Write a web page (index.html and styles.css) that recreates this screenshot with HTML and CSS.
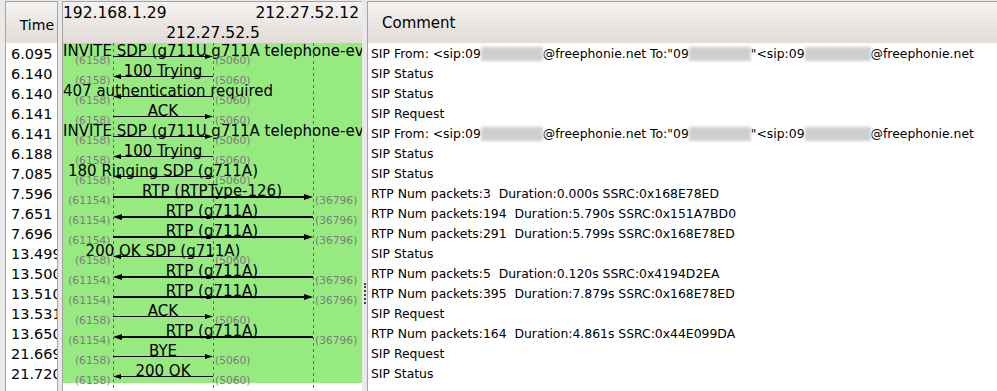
FILE: index.html
```html
<!DOCTYPE html>
<html>
<head>
<meta charset="utf-8">
<link rel="stylesheet" href="styles.css">
</head>
<body>
<div class="app">
  <div class="pane time-pane">
    <div class="hdr time-hdr">Time</div>
    <div class="rows time-rows">
      <div class="row">6.095</div>
      <div class="row">6.140</div>
      <div class="row">6.140</div>
      <div class="row">6.141</div>
      <div class="row">6.141</div>
      <div class="row">6.188</div>
      <div class="row">7.085</div>
      <div class="row">7.596</div>
      <div class="row">7.651</div>
      <div class="row">7.696</div>
      <div class="row">13.499</div>
      <div class="row">13.500</div>
      <div class="row">13.510</div>
      <div class="row">13.531</div>
      <div class="row">13.650</div>
      <div class="row">21.669</div>
      <div class="row">21.720</div>
    </div>
  </div>

  <div class="pane graph-pane">
    <div class="hdr graph-hdr">
      <div class="ips"><span>192.168.1.29</span><span>212.27.52.12</span></div>
      <div class="ip-mid">212.27.52.5</div>
    </div>
    <svg class="flow" width="299" height="347" viewBox="0 0 299 347">
      <rect class="bg" x="0" y="0" width="299" height="340"/>
      <line class="life" x1="50.5" y1="0" x2="50.5" y2="347"/>
      <line class="life" x1="150.5" y1="0" x2="150.5" y2="347"/>
      <line class="life" x1="250.5" y1="0" x2="250.5" y2="347"/>

      <!-- row 0 -->
      <text class="lbl" x="0" y="12.5">INVITE SDP (g711U g711A telephone-event)</text>
      <line class="sip" x1="50" y1="13.5" x2="149" y2="13.5"/>
      <polygon class="head" points="142,11 150,13.5 142,16"/>
      <text class="port" x="47.5" y="20.5" text-anchor="end">(6158)</text>
      <text class="port" x="152" y="20.5">(5060)</text>

      <!-- row 1 -->
      <text class="lbl" x="100" y="32.5" text-anchor="middle">100 Trying</text>
      <line class="sip" x1="51" y1="33.5" x2="150" y2="33.5"/>
      <polygon class="head" points="50,33.5 58,31 58,36"/>
      <text class="port" x="47.5" y="40.5" text-anchor="end">(6158)</text>
      <text class="port" x="152" y="40.5">(5060)</text>

      <!-- row 2 -->
      <text class="lbl" x="0" y="52.5">407 authentication required</text>
      <line class="sip" x1="51" y1="53.5" x2="150" y2="53.5"/>
      <polygon class="head" points="50,53.5 58,51 58,56"/>
      <text class="port" x="47.5" y="60.5" text-anchor="end">(6158)</text>
      <text class="port" x="152" y="60.5">(5060)</text>

      <!-- row 3 -->
      <text class="lbl" x="100" y="72.5" text-anchor="middle">ACK</text>
      <line class="sip" x1="50" y1="73.5" x2="149" y2="73.5"/>
      <polygon class="head" points="142,71 150,73.5 142,76"/>
      <text class="port" x="47.5" y="80.5" text-anchor="end">(6158)</text>
      <text class="port" x="152" y="80.5">(5060)</text>

      <!-- row 4 -->
      <text class="lbl" x="0" y="92.5">INVITE SDP (g711U g711A telephone-event)</text>
      <line class="sip" x1="50" y1="93.5" x2="149" y2="93.5"/>
      <polygon class="head" points="142,91 150,93.5 142,96"/>
      <text class="port" x="47.5" y="100.5" text-anchor="end">(6158)</text>
      <text class="port" x="152" y="100.5">(5060)</text>

      <!-- row 5 -->
      <text class="lbl" x="100" y="112.5" text-anchor="middle">100 Trying</text>
      <line class="sip" x1="51" y1="113.5" x2="150" y2="113.5"/>
      <polygon class="head" points="50,113.5 58,111 58,116"/>
      <text class="port" x="47.5" y="120.5" text-anchor="end">(6158)</text>
      <text class="port" x="152" y="120.5">(5060)</text>

      <!-- row 6 -->
      <text class="lbl" x="100" y="132.5" text-anchor="middle">180 Ringing SDP (g711A)</text>
      <line class="sip" x1="51" y1="133.5" x2="150" y2="133.5"/>
      <polygon class="head" points="50,133.5 58,131 58,136"/>
      <text class="port" x="47.5" y="140.5" text-anchor="end">(6158)</text>
      <text class="port" x="152" y="140.5">(5060)</text>

      <!-- row 7 -->
      <text class="lbl" x="149" y="152.5" text-anchor="middle">RTP (RTPType-126)</text>
      <line class="rtp" x1="50" y1="154" x2="248" y2="154"/>
      <polygon class="head" points="241,151 250,154 241,157"/>
      <text class="port" x="47.5" y="160.5" text-anchor="end">(61154)</text>
      <text class="port" x="252" y="160.5">(36796)</text>

      <!-- row 8 -->
      <text class="lbl" x="149" y="172.5" text-anchor="middle">RTP (g711A)</text>
      <line class="rtp" x1="52" y1="174" x2="250" y2="174"/>
      <polygon class="head" points="50,174 59,171 59,177"/>
      <text class="port" x="47.5" y="180.5" text-anchor="end">(61154)</text>
      <text class="port" x="252" y="180.5">(36796)</text>

      <!-- row 9 -->
      <text class="lbl" x="149" y="192.5" text-anchor="middle">RTP (g711A)</text>
      <line class="rtp" x1="50" y1="194" x2="248" y2="194"/>
      <polygon class="head" points="241,191 250,194 241,197"/>
      <text class="port" x="47.5" y="200.5" text-anchor="end">(61154)</text>
      <text class="port" x="252" y="200.5">(36796)</text>

      <!-- row 10 -->
      <text class="lbl" x="100" y="212.5" text-anchor="middle">200 OK SDP (g711A)</text>
      <line class="sip" x1="51" y1="213.5" x2="150" y2="213.5"/>
      <polygon class="head" points="50,213.5 58,211 58,216"/>
      <text class="port" x="47.5" y="220.5" text-anchor="end">(6158)</text>
      <text class="port" x="152" y="220.5">(5060)</text>

      <!-- row 11 -->
      <text class="lbl" x="149" y="232.5" text-anchor="middle">RTP (g711A)</text>
      <line class="rtp" x1="52" y1="234" x2="250" y2="234"/>
      <polygon class="head" points="50,234 59,231 59,237"/>
      <text class="port" x="47.5" y="240.5" text-anchor="end">(61154)</text>
      <text class="port" x="252" y="240.5">(36796)</text>

      <!-- row 12 -->
      <text class="lbl" x="149" y="252.5" text-anchor="middle">RTP (g711A)</text>
      <line class="rtp" x1="50" y1="254" x2="248" y2="254"/>
      <polygon class="head" points="241,251 250,254 241,257"/>
      <text class="port" x="47.5" y="260.5" text-anchor="end">(61154)</text>
      <text class="port" x="252" y="260.5">(36796)</text>

      <!-- row 13 -->
      <text class="lbl" x="100" y="272.5" text-anchor="middle">ACK</text>
      <line class="sip" x1="50" y1="273.5" x2="149" y2="273.5"/>
      <polygon class="head" points="142,271 150,273.5 142,276"/>
      <text class="port" x="47.5" y="280.5" text-anchor="end">(6158)</text>
      <text class="port" x="152" y="280.5">(5060)</text>

      <!-- row 14 -->
      <text class="lbl" x="149" y="292.5" text-anchor="middle">RTP (g711A)</text>
      <line class="rtp" x1="52" y1="294" x2="250" y2="294"/>
      <polygon class="head" points="50,294 59,291 59,297"/>
      <text class="port" x="47.5" y="300.5" text-anchor="end">(61154)</text>
      <text class="port" x="252" y="300.5">(36796)</text>

      <!-- row 15 -->
      <text class="lbl" x="100" y="312.5" text-anchor="middle">BYE</text>
      <line class="sip" x1="50" y1="313.5" x2="149" y2="313.5"/>
      <polygon class="head" points="142,311 150,313.5 142,316"/>
      <text class="port" x="47.5" y="320.5" text-anchor="end">(6158)</text>
      <text class="port" x="152" y="320.5">(5060)</text>

      <!-- row 16 -->
      <text class="lbl" x="100" y="332.5" text-anchor="middle">200 OK</text>
      <line class="sip" x1="51" y1="333.5" x2="150" y2="333.5"/>
      <polygon class="head" points="50,333.5 58,331 58,336"/>
      <text class="port" x="47.5" y="340.5" text-anchor="end">(6158)</text>
      <text class="port" x="152" y="340.5">(5060)</text>
    </svg>
  </div>

  <div class="grip-col"><div class="grip"></div></div>

  <div class="pane comment-pane">
    <div class="hdr comment-hdr">Comment</div>
    <div class="rows comment-rows">
      <div class="row">SIP From: &lt;sip:09<span class="blur b1"></span>@freephonie.net To:"09<span class="blur b2"></span>"&lt;sip:09<span class="blur b3"></span>@freephonie.net</div>
      <div class="row">SIP Status</div>
      <div class="row">SIP Status</div>
      <div class="row">SIP Request</div>
      <div class="row">SIP From: &lt;sip:09<span class="blur b1"></span>@freephonie.net To:"09<span class="blur b2"></span>"&lt;sip:09<span class="blur b3"></span>@freephonie.net</div>
      <div class="row">SIP Status</div>
      <div class="row">SIP Status</div>
      <div class="row">RTP Num packets:3  Duration:0.000s SSRC:0x168E78ED</div>
      <div class="row">RTP Num packets:194  Duration:5.790s SSRC:0x151A7BD0</div>
      <div class="row">RTP Num packets:291  Duration:5.799s SSRC:0x168E78ED</div>
      <div class="row">SIP Status</div>
      <div class="row">RTP Num packets:5  Duration:0.120s SSRC:0x4194D2EA</div>
      <div class="row">RTP Num packets:395  Duration:7.879s SSRC:0x168E78ED</div>
      <div class="row">SIP Request</div>
      <div class="row">RTP Num packets:164  Duration:4.861s SSRC:0x44E099DA</div>
      <div class="row">SIP Request</div>
      <div class="row">SIP Status</div>
    </div>
  </div>
</div>
</body>
</html>
```

FILE: styles.css
```css
html, body {
  margin: 0;
  padding: 0;
  height: 100%;
}

body {
  background: #e9e9e9;
  font-family: "DejaVu Sans", "Noto Sans", sans-serif;
  color: #000;
  overflow: hidden;
}

.app {
  display: flex;
  height: 391px;
  box-sizing: border-box;
  padding-top: 1px;
  padding-left: 5px;
}

.pane {
  display: flex;
  flex-direction: column;
  background: #fff;
  overflow: hidden;
}

.hdr {
  flex: 0 0 auto;
  height: 41px;
  border-top: 1px solid #a4a4a4;
  background: linear-gradient(#f5f3f1, #e3dbd7);
  white-space: nowrap;
  overflow: hidden;
}

.rows {
  padding-top: 1px;
}

.row {
  height: 20px;
  line-height: 20px;
  white-space: pre;
  overflow: hidden;
}

/* Time column */
.time-pane {
  width: 51px;
  border-left: 1px solid #a4a4a4;
  border-right: 1px solid #a4a4a4;
}

.time-hdr {
  font-size: 14px;
  line-height: 16px;
  padding-top: 15px;
  padding-right: 3px;
  height: 26px;
  text-align: right;
}

.time-rows {
  font-size: 14.5px;
  padding-left: 5px;
}

/* Graph column */
.graph-pane {
  width: 299px;
  margin-left: 4px;
  border-left: 1px solid #a4a4a4;
}

.graph-hdr {
  font-size: 15.5px;
  line-height: 20px;
  padding-top: 1px;
  height: 40px;
}

.ips {
  display: flex;
  justify-content: space-between;
  padding-right: 3px;
}

.ip-mid {
  text-align: center;
  padding-left: 1px;
}

.flow {
  display: block;
}

.flow .bg {
  fill: #97ea80;
}

.flow .life {
  stroke: #6a6a6a;
  stroke-width: 1;
  stroke-dasharray: 3 3;
}

.flow .sip {
  stroke: #000;
  stroke-width: 1;
}

.flow .rtp {
  stroke: #000;
  stroke-width: 2;
}

.flow .head {
  fill: #000;
}

.flow .lbl {
  font-family: "DejaVu Sans", sans-serif;
  font-size: 15px;
  fill: #000;
}

.flow .port {
  font-family: "DejaVu Sans", sans-serif;
  font-size: 10.7px;
  fill: #7e7a80;
}

/* Splitter */
.grip-col {
  width: 5px;
  padding-top: 282px;
  box-sizing: border-box;
}

.grip {
  width: 0;
  height: 21px;
  margin-left: 2px;
  border-left: 2px dotted #444;
}

/* Comment column */
.comment-pane {
  flex: 1 1 auto;
  border-left: 1px solid #a4a4a4;
}

.comment-hdr {
  font-size: 15px;
  line-height: 17px;
  padding-top: 13px;
  padding-left: 14px;
  height: 28px;
}

.comment-rows {
  font-size: 12.4px;
  padding-left: 3px;
}

.blur {
  display: inline-block;
  height: 14px;
  vertical-align: -3px;
  background: #cfcfcf;
  filter: blur(1.5px);
}

.b1 { width: 62px; }
.b2 { width: 62px; }
.b3 { width: 66px; }
```
